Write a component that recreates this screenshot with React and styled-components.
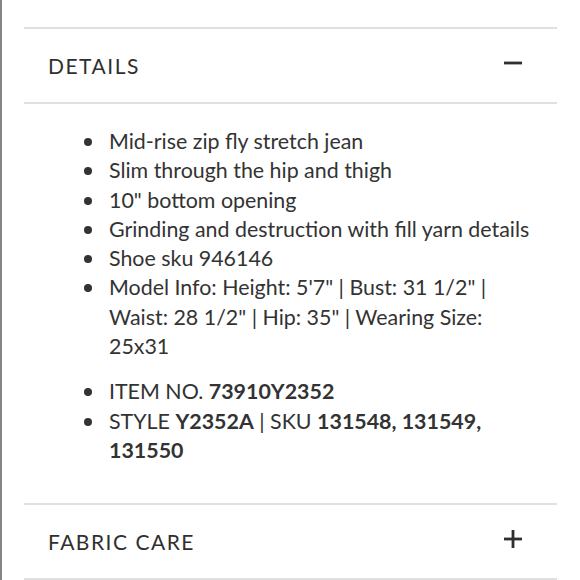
import React from "react";
import styled, { createGlobalStyle } from "styled-components";

const GlobalStyle = createGlobalStyle`
  html, body {
    margin: 0;
    padding: 0;
    background: #ffffff;
  }
  body {
    font-family: Lato, "Open Sans", sans-serif;
    color: #333333;
  }
`;

const Page = styled.div`
  box-sizing: border-box;
  width: 580px;
  height: 580px;
  overflow: hidden;
  border-left: 2px solid #858585;
  padding: 27px 0 0 22px;
`;

const Accordion = styled.div`
  width: 533px;
`;

const Section = styled.section`
  border-top: 2px solid #e0e0e0;
  &:last-child {
    border-bottom: 2px solid #e0e0e0;
  }
`;

const Header = styled.div`
  display: flex;
  align-items: center;
  justify-content: space-between;
  height: 73px;
  padding: 0 35px 0 24px;
`;

const Title = styled.h3`
  margin: 0;
  font-family: Lato, sans-serif;
  font-size: 21px;
  font-weight: 400;
  letter-spacing: 1.5px;
  color: #2f2f2f;
`;

const Toggle = styled.svg`
  width: 18px;
  height: 18px;
  display: block;
  margin-top: ${(p) => p.$nudge || 0}px;
`;

const Body = styled.div`
  padding: 23px 20px 38px 58px;
`;

const List = styled.ul`
  list-style: none;
  margin: 0;
  padding: 0;
  & + & {
    margin-top: 16px;
  }
`;

const Item = styled.li`
  display: flex;
  gap: 17px;
  font-family: Lato, sans-serif;
  font-size: 21.4px;
  line-height: 29.3px;
  color: #333333;
`;

const Bullet = styled.span`
  flex: none;
  width: 8px;
  height: 8px;
  border-radius: 50%;
  background: #333333;
  margin: 11px 0 0 2px;
`;

const Text = styled.span`
  flex: 1;
`;

const Strong = styled.b`
  font-weight: 700;
`;

const Minus = () => (
  <Toggle viewBox="0 0 18 18" $nudge={-6}>
    <rect x="0" y="7.6" width="18" height="2.8" fill="#2f2f2f" />
  </Toggle>
);

const Plus = () => (
  <Toggle viewBox="0 0 18 18" $nudge={-6}>
    <rect x="0" y="7.6" width="18" height="2.8" fill="#2f2f2f" />
    <rect x="7.6" y="0" width="2.8" height="18" fill="#2f2f2f" />
  </Toggle>
);

const details = [
  "Mid-rise zip fly stretch jean",
  "Slim through the hip and thigh",
  '10" bottom opening',
  "Grinding and destruction with fill yarn details",
  "Shoe sku 946146",
  'Model Info: Height: 5\'7" | Bust: 31 1/2" | Waist: 28 1/2" | Hip: 35" | Wearing Size: 25x31',
];

export default function App() {
  return (
    <>
      <GlobalStyle />
      <Page>
        <Accordion>
          <Section>
            <Header>
              <Title>DETAILS</Title>
              <Minus />
            </Header>
          </Section>
          <Section>
            <Body>
              <List>
                {details.map((d) => (
                  <Item key={d}>
                    <Bullet />
                    <Text>{d}</Text>
                  </Item>
                ))}
              </List>
              <List>
                <Item>
                  <Bullet />
                  <Text>
                    ITEM NO. <Strong>73910Y2352</Strong>
                  </Text>
                </Item>
                <Item>
                  <Bullet />
                  <Text>
                    STYLE <Strong>Y2352A</Strong> | SKU{" "}
                    <Strong>131548, 131549,</Strong> <Strong>131550</Strong>
                  </Text>
                </Item>
              </List>
            </Body>
          </Section>
          <Section>
            <Header>
              <Title>FABRIC CARE</Title>
              <Plus />
            </Header>
          </Section>
        </Accordion>
      </Page>
    </>
  );
}
